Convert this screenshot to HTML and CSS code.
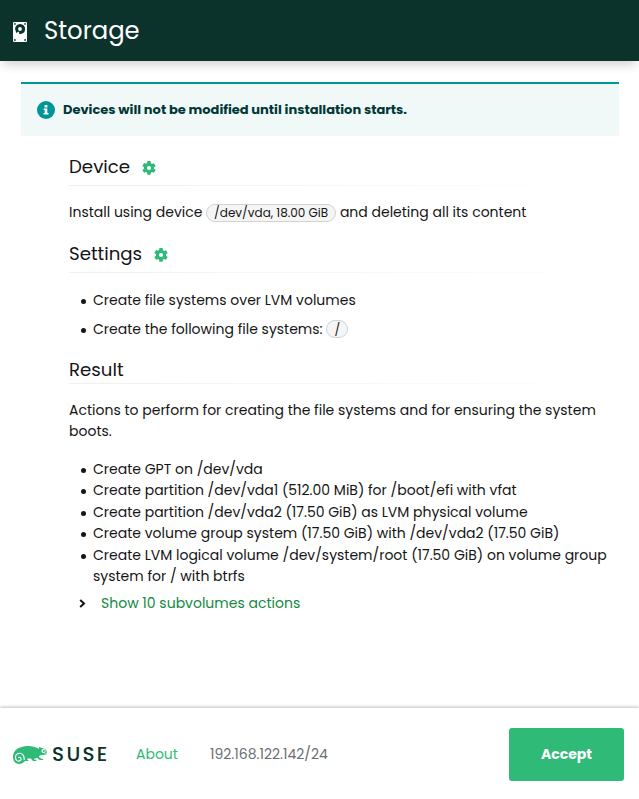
FILE: index.html
```html
<!DOCTYPE html>
<html lang="en">
<head>
<meta charset="utf-8">
<title>Storage</title>
<link rel="stylesheet" href="styles.css">
</head>
<body>
<svg class="sprite" aria-hidden="true">
  <symbol id="gear" viewBox="2 2 20 20"><path d="M19.14 12.94c.04-.3.06-.61.06-.94s-.02-.64-.07-.94l2.03-1.58c.18-.14.23-.41.12-.61l-1.92-3.32c-.12-.22-.37-.29-.59-.22l-2.39.96c-.5-.38-1.03-.7-1.62-.94l-.36-2.54A.48.48 0 0 0 13.92 2h-3.84c-.24 0-.43.17-.47.41l-.36 2.54c-.59.24-1.13.57-1.62.94l-2.39-.96c-.22-.08-.47 0-.59.22L2.74 8.87c-.12.21-.08.47.12.61l2.03 1.58a7.900 7.900 0 0 0 0 1.880l-2.03 1.580c-.18.14-.23.41-.12.61l1.920 3.320c.12.22.37.29.59.22l2.390-.96c.5.38 1.030.7 1.620.94l.36 2.540c.05.24.24.41.48.41h3.840c.24 0 .44-.17.47-.41l.36-2.540c.59-.24 1.130-.56 1.620-.94l2.390.96c.22.08.47 0 .59-.22l1.920-3.320c.12-.22.07-.47-.12-.61zM12 15a3 3 0 1 1 0-6 3 3 0 0 1 0 6z"/></symbol>
</svg>
<header class="header">
  <svg class="disk" viewBox="0 0 14 20"><rect width="14" height="20" rx="1" fill="#fff"/><g fill="#0c322c"><circle cx="1.900" cy="1.900" r=".9"/><circle cx="12.100" cy="1.900" r=".9"/><circle cx="1.900" cy="18" r=".9"/><circle cx="12.100" cy="18" r=".9"/><path d="M7 2a5 5 0 1 1-.8 9.900L6 9.500 3 11V10A5 5 0 0 1 7 2z"/></g><circle cx="7" cy="7" r="1.900" fill="#fff"/></svg>
  <h1>Storage</h1>
</header>
<main>
  <div class="alert">
    <svg viewBox="0 0 18 18"><circle cx="9" cy="9" r="9" fill="#009596"/><path fill="#fff" d="M7.600 4h2.800v2.400H7.600zM6.700 7.500h3.600v4.400h1.200v1.600H6.500v-1.600h1.200V9.100h-1z"/></svg>
    <strong>Devices will not be modified until installation starts.</strong>
  </div>
  <section class="device">
    <h2 class="with-button"><span>Device</span><svg class="gear"><use href="#gear"/></svg></h2>
    <p class="target">Install using device <span class="chip">/dev/vda, 18.00 GiB</span> and deleting all its content</p>
  </section>
  <section class="settings">
    <h2 class="with-button"><span>Settings</span><svg class="gear"><use href="#gear"/></svg></h2>
    <ul><li>Create file systems over LVM volumes</li><li>Create the following file systems: <span class="chip root">/</span></li></ul>
  </section>
  <section class="result">
    <h2>Result</h2>
    <p class="intro">Actions to perform for creating the file systems and for ensuring the system boots.</p>
    <ul class="actions">
      <li>Create GPT on /dev/vda</li>
      <li>Create partition /dev/vda1 (512.00 MiB) for /boot/efi with vfat</li>
      <li>Create partition /dev/vda2 (17.50 GiB) as LVM physical volume</li>
      <li>Create volume group system (17.50 GiB) with /dev/vda2 (17.50 GiB)</li>
      <li>Create LVM logical volume /dev/system/root (17.50 GiB) on volume group system for / with btrfs</li>
    </ul>
    <div class="toggle"><svg viewBox="0 0 7 9"><path d="M1.200 1 5 4.500 1.200 8" fill="none" stroke="#151515" stroke-width="2"/></svg><span>Show 10 subvolumes actions</span></div>
  </section>
</main>
<footer class="footer">
  <svg class="chameleon" viewBox="0 0 34 18"><path fill="#30ba78" d="M0 11C0 5 5 1 12 .3c5-.8 9 .3 14 2.500V.9c2 .7 4 1.500 6 2.100 1 .4 1.600 1.500 1.900 3.500.1 1.500-.6 2-2 2.300-2 .4-3.900.3-5.100.8-1.200.6-.9 1.500-.3 2l1.800 1.100c1.300.1 2 .4 2 1.200h-3.500c-1.200-.7-1.800-1.700-2.800-2.200-1.200.8-2 1-3 1-.2.6.2.9 1 1l1.400.1v1.100h-3.400c-1.200-.6-1.500-1.500-2-2.300-1.500 0-2.500-.3-3.400-.1-.8.7-.4 1.300.7 1.400v1.100h-3.200C10 16.700 8.500 18 6 18c-3.500 0-6-3-6-7z"/><path fill="none" stroke="#fff" stroke-width="1.100" d="M11.300 14C11.600 9.500 9 7 6.300 7.200 3.800 7.400 2.300 9.500 2.500 11.800c.2 2 1.600 3.400 3.400 3.300 1.600-.1 2.500-1.400 2.100-2.700-.4-1.200-2-1.500-2.700-.5"/><circle cx="30.500" cy="5" r="2.100" fill="#fff"/><circle cx="30.800" cy="4.900" r="1" fill="#30ba78"/><path d="M33.800 6.800 31 8.100" stroke="#fff" stroke-width=".5"/></svg>
  <span class="brand">SUSE</span>
  <span class="about">About</span>
  <span class="ip">192.168.122.142/24</span>
  <button type="button">Accept</button>
</footer>
</body>
</html>
```
FILE: styles.css
```css
* { box-sizing: border-box; }
body { margin: 0; height: 799px; display: flex; flex-direction: column; font: 14px/21.5px Poppins, Inter, sans-serif; color: #151515; background: #fff; overflow: hidden; }
h1, h2, p, ul { margin: 0; font-weight: 400; }
.sprite { position: absolute; width: 0; height: 0; }
.header { height: 61px; flex: none; display: flex; align-items: center; padding-left: 13px; background: #0c322c; color: #fff; box-shadow: 0 6px 10px -3px rgba(0,0,0,.2); }
.disk { width: 14px; height: 20px; margin: 3px 17px 0 0; }
h1 { font-size: 24.3px; line-height: 36px; }
main { flex: 1; padding: 21px 20px 0 21px; }
.alert { height: 54px; display: flex; align-items: center; gap: 8px; padding-left: 16px; border-top: 2px solid #009596; background: #f0f9f8; color: #003737; font-size: 13px; }
.alert svg { width: 18px; height: 18px; }
.alert strong { font-weight: 700; }
section { padding-left: 48px; }
.device { margin-top: 13px; }
h2 { height: 28px; padding-bottom: 1px; font-size: 18.2px; line-height: 27px; display: flex; align-items: center; gap: 12px; background: linear-gradient(to right, #f0f0f0, #fff) bottom / 100% 1px no-repeat; }
h2.with-button { height: 37px; padding-bottom: 2px; }
.gear { width: 14px; height: 14px; fill: #30ba78; margin-top: 2px; }
.target { margin-top: 16px; height: 22px; white-space: nowrap; }
.chip { display: inline-flex; align-items: center; justify-content: center; width: 130px; height: 18px; border: 1px solid #d2d2d2; border-radius: 9px; background: #f5f5f5; font-size: 12px; vertical-align: 0; }
.root { width: 22px; }
.settings { margin-top: 12px; }
.settings ul { height: 51px; margin-top: 17px; }
ul { padding-left: 24px; list-style: none; }
li { position: relative; }
li::before { content: ""; position: absolute; left: -12px; top: 9px; width: 5px; height: 5px; border-radius: 50%; background: #151515; }
.settings li + li { margin-top: 7px; }
.result { margin-top: 15px; }
.intro { margin-top: 15.7px; width: 549px; }
.actions { margin-top: 16px; }
.toggle { display: flex; align-items: center; gap: 15px; padding-left: 10px; margin-top: 5.300px; color: #138a3f; }
.toggle svg { width: 7px; height: 9px; }
.footer { height: 91px; flex: none; display: flex; align-items: center; padding: 2px 15px 0 13px; background: #fff; box-shadow: 0 -1px 3px rgba(0,0,0,.25); }
.chameleon { width: 34px; height: 18px; margin-top: 1px; }
.brand { width: 84px; margin-left: 5px; color: #0c322c; font-size: 20px; font-weight: 500; letter-spacing: 2.3px; }
.about { width: 74px; color: #30ba78; }
.ip { color: #6a6e73; }
button { margin-left: auto; width: 115px; height: 53px; border: 0; border-radius: 3px; background: #30ba78; color: #fff; font: 700 14px Poppins, Inter, sans-serif; }
```
